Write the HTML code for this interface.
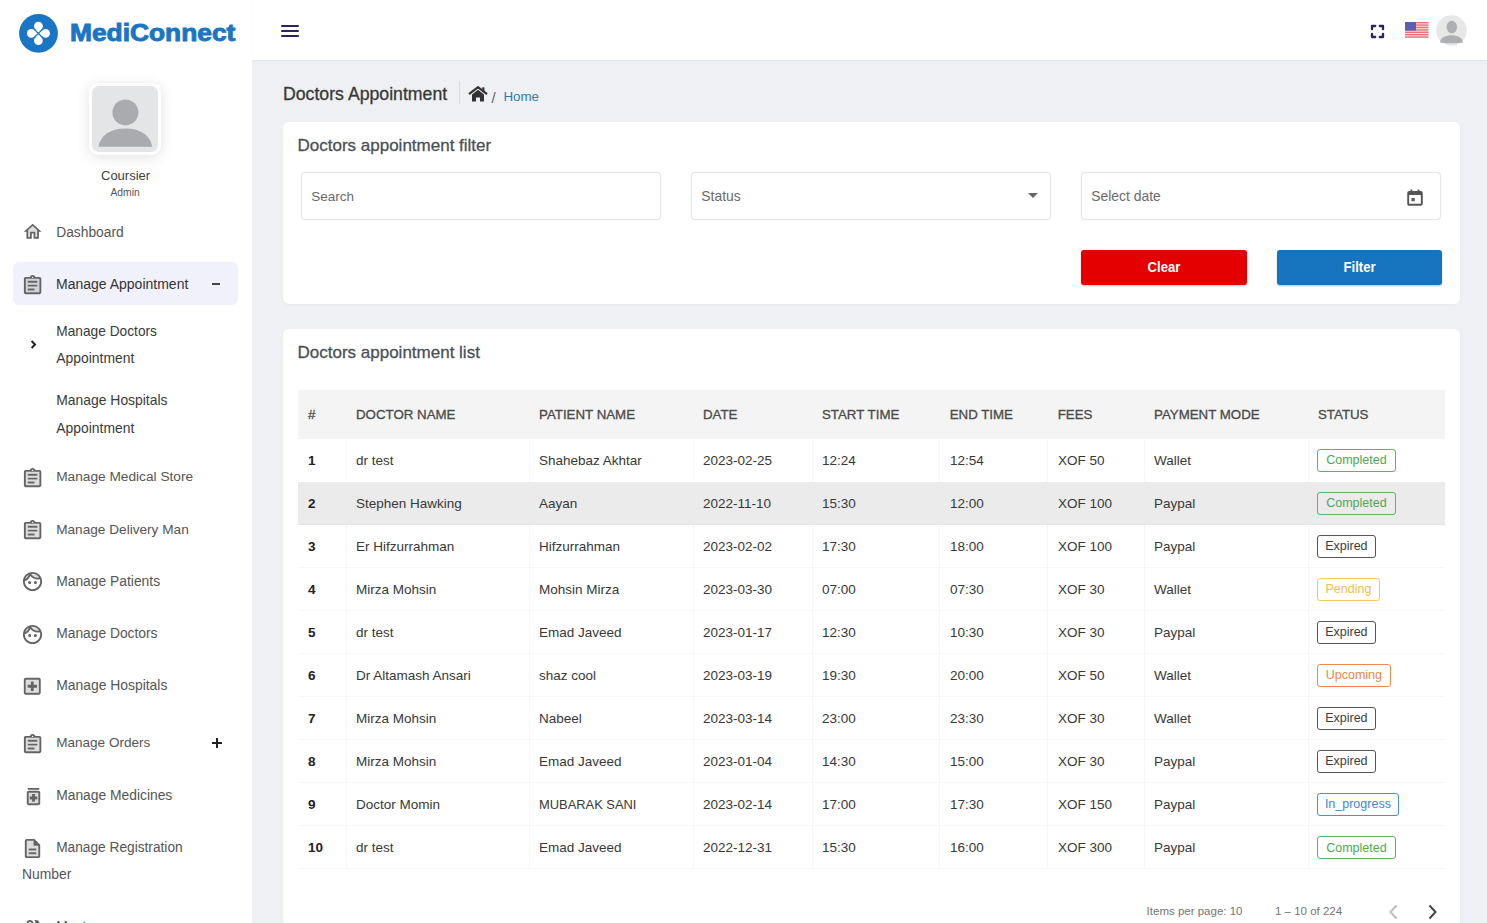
<!DOCTYPE html>
<html><head><meta charset="utf-8"><title>MediConnect</title>
<style>
*{box-sizing:border-box;margin:0;padding:0}
html,body{width:1487px;height:923px;overflow:hidden}
body{font-family:"Liberation Sans", sans-serif;background:#eef0f3;position:relative}
.a{position:absolute}
.t{position:absolute;white-space:nowrap;line-height:1}
</style></head><body>
<div class="a" style="left:0px;top:0px;width:252px;height:923px;background:#fff"></div>
<svg class="a" style="left:19px;top:14px" width="39" height="39" viewBox="0 0 39 39">
<circle cx="19.5" cy="19.4" r="19.4" fill="#1a76c4"/>
<g fill="#fff"><circle cx="19.4" cy="12.2" r="4.4"/><circle cx="19.4" cy="26.6" r="4.4"/><circle cx="12.3" cy="19.4" r="4.4"/><circle cx="26.5" cy="19.4" r="4.4"/>
<path d="M19.4 13.5 L25.3 19.4 L19.4 25.3 L13.5 19.4 Z"/></g>
<path d="M15.6 15.6 L23.2 23.2 M23.2 15.6 L15.6 23.2" stroke="#1a76c4" stroke-width="1.3"/>
</svg>
<div class="t" style="left:69.5px;top:21.6px;font-size:23px;line-height:23px;font-weight:bold;color:#1a76c4;transform-origin:0 0;transform:scaleX(1.145);-webkit-text-stroke:0.9px #1a76c4">MediConnect</div>
<div class="a" style="left:89px;top:83px;width:72px;height:72px;background:#fff;border-radius:9px;box-shadow:0 2px 14px rgba(0,0,0,.12)"></div>
<div class="a" style="left:92px;top:86px;width:66px;height:66px;background:#e4e5e7;border-radius:7px"></div>
<svg class="a" style="left:92px;top:86px" width="66" height="66" viewBox="0 0 66 66">
<circle cx="33.4" cy="26.4" r="13" fill="#a9abae"/>
<path d="M6.4 60.8 C8 50 18 42.5 33.4 42.5 C48.8 42.5 58.8 50 60.2 60.8 Z" fill="#a9abae"/>
</svg>
<div class="t" style="left:101px;top:168.55px;font-size:13px;color:#404040;font-weight:normal;">Coursier</div>
<div class="t" style="left:110.5px;top:187.75px;font-size:10.3px;color:#555;font-weight:normal;">Admin</div>
<div class="a" style="left:13px;top:262px;width:225px;height:43px;background:#f1f1fb;border-radius:6px"></div>
<svg class="a" style="left:22.4px;top:221.4px" width="21.36" height="21.36" viewBox="0 0 24 24"><path d="M7 10.19V18h2v-6h6v6h2v-7.81l-5-4.5z" fill="#636363" opacity=".22"/><path d="M12 3L2 12h3v8h6v-6h2v6h6v-8h3L12 3zm5 15h-2v-6H9v6H7v-7.81l5-4.5 5 4.5V18z" fill="#636363"/></svg>
<div class="t" style="left:56.2px;top:225.57px;font-size:13.8px;color:#555;font-weight:normal;">Dashboard</div>
<svg class="a" style="left:21.2px;top:273.6px" width="23.21" height="23.21" viewBox="0 0 24 24"><path d="M5 19h14V5H5v14zm2-12h10v2H7V7zm0 4h10v2H7v-2zm0 4h7v2H7v-2z" fill="#636363" opacity=".22"/><path d="M7 15h7v2H7zm0-4h10v2H7zm0-4h10v2H7zm12-4h-4.18C14.4 1.84 13.3 1 12 1c-.7 0-1.34.25-1.84.66-.29.23-.54.53-.73.86-.08.14-.14.31-.21.48H5c-.14 0-.27.01-.4.04-.39.08-.74.28-1.01.55-.18.18-.33.4-.43.64-.1.23-.16.49-.16.77v14c0 .27.06.54.16.78s.25.45.43.64c.27.27.62.47 1.01.55.13.02.26.03.4.03h14c1.1 0 2-.9 2-2V5c0-1.1-.9-2-2-2zm-7-.25c.41 0 .75.34.75.75s-.34.75-.75.75-.75-.34-.75-.75.34-.75.75-.75zM19 19H5V5h14v14z" fill="#636363"/></svg>
<div class="t" style="left:56.0px;top:277.20px;font-size:14.0px;color:#333;font-weight:normal;">Manage Appointment</div>
<div class="a" style="left:211.8px;top:283.3px;width:8.6px;height:1.3px;background:#444"></div>
<svg class="a" style="left:30px;top:340px" width="8" height="9" viewBox="0 0 8 9">
<path d="M1.6 1 L5 4.5 L1.6 8" fill="none" stroke="#222" stroke-width="2"/>
</svg>
<div class="t" style="left:56.3px;top:325.04px;font-size:13.72px;color:#3a3a3a;font-weight:normal;">Manage Doctors</div>
<div class="t" style="left:56.3px;top:351.79px;font-size:13.9px;color:#3a3a3a;font-weight:normal;">Appointment</div>
<div class="t" style="left:56.3px;top:394.38px;font-size:13.9px;color:#3a3a3a;font-weight:normal;">Manage Hospitals</div>
<div class="t" style="left:56.3px;top:421.79px;font-size:13.9px;color:#3a3a3a;font-weight:normal;">Appointment</div>
<svg class="a" style="left:21.2px;top:466.5px" width="23.21" height="23.21" viewBox="0 0 24 24"><path d="M5 19h14V5H5v14zm2-12h10v2H7V7zm0 4h10v2H7v-2zm0 4h7v2H7v-2z" fill="#636363" opacity=".22"/><path d="M7 15h7v2H7zm0-4h10v2H7zm0-4h10v2H7zm12-4h-4.18C14.4 1.84 13.3 1 12 1c-.7 0-1.34.25-1.84.66-.29.23-.54.53-.73.86-.08.14-.14.31-.21.48H5c-.14 0-.27.01-.4.04-.39.08-.74.28-1.01.55-.18.18-.33.4-.43.64-.1.23-.16.49-.16.77v14c0 .27.06.54.16.78s.25.45.43.64c.27.27.62.47 1.01.55.13.02.26.03.4.03h14c1.1 0 2-.9 2-2V5c0-1.1-.9-2-2-2zm-7-.25c.41 0 .75.34.75.75s-.34.75-.75.75-.75-.34-.75-.75.34-.75.75-.75zM19 19H5V5h14v14z" fill="#636363"/></svg>
<div class="t" style="left:56.2px;top:470.36px;font-size:13.69px;color:#555;font-weight:normal;">Manage Medical Store</div>
<svg class="a" style="left:21.2px;top:518.8px" width="23.21" height="23.21" viewBox="0 0 24 24"><path d="M5 19h14V5H5v14zm2-12h10v2H7V7zm0 4h10v2H7v-2zm0 4h7v2H7v-2z" fill="#636363" opacity=".22"/><path d="M7 15h7v2H7zm0-4h10v2H7zm0-4h10v2H7zm12-4h-4.18C14.4 1.84 13.3 1 12 1c-.7 0-1.34.25-1.84.66-.29.23-.54.53-.73.86-.08.14-.14.31-.21.48H5c-.14 0-.27.01-.4.04-.39.08-.74.28-1.01.55-.18.18-.33.4-.43.64-.1.23-.16.49-.16.77v14c0 .27.06.54.16.78s.25.45.43.64c.27.27.62.47 1.01.55.13.02.26.03.4.03h14c1.1 0 2-.9 2-2V5c0-1.1-.9-2-2-2zm-7-.25c.41 0 .75.34.75.75s-.34.75-.75.75-.75-.34-.75-.75.34-.75.75-.75zM19 19H5V5h14v14z" fill="#636363"/></svg>
<div class="t" style="left:56.2px;top:522.71px;font-size:13.64px;color:#555;font-weight:normal;">Manage Delivery Man</div>
<svg class="a" style="left:21.4px;top:569.9px" width="23.04" height="23.04" viewBox="0 0 24 24"><path d="M17.5 8c.46 0 .91-.05 1.34-.12C17.44 5.56 14.9 4 12 4c-.46 0-.91.05-1.34.12C12.06 6.44 14.6 8 17.5 8zM8.08 5.03C6.37 6 5.05 7.58 4.42 9.47c1.71-.97 3.03-2.55 3.66-4.44z" fill="#636363" opacity=".22"/><path d="M12 2C6.48 2 2 6.48 2 12s4.48 10 10 10 10-4.48 10-10S17.52 2 12 2zm0 2c2.9 0 5.44 1.56 6.84 3.88-.43.07-.88.12-1.34.12-2.9 0-5.44-1.56-6.84-3.88.43-.07.88-.12 1.34-.12zM8.08 5.03C7.45 6.92 6.13 8.5 4.42 9.47 5.05 7.58 6.37 6 8.08 5.03zM12 20c-4.41 0-8-3.59-8-8 0-.05.01-.1.01-.15 2.6-.98 4.68-2.99 5.74-5.55 1.83 2.26 4.63 3.7 7.75 3.7.75 0 1.47-.09 2.17-.24.21.71.33 1.46.33 2.24 0 4.41-3.59 8-8 8z" fill="#636363"/><path d="M7.4 13a1.6 1.6 0 1 0 3.2 0a1.6 1.6 0 1 0 -3.2 0zM13.4 13a1.6 1.6 0 1 0 3.2 0a1.6 1.6 0 1 0 -3.2 0z" fill="#636363"/></svg>
<div class="t" style="left:56.2px;top:574.53px;font-size:13.85px;color:#555;font-weight:normal;">Manage Patients</div>
<svg class="a" style="left:21.4px;top:622.5px" width="23.04" height="23.04" viewBox="0 0 24 24"><path d="M17.5 8c.46 0 .91-.05 1.34-.12C17.44 5.56 14.9 4 12 4c-.46 0-.91.05-1.34.12C12.06 6.44 14.6 8 17.5 8zM8.08 5.03C6.37 6 5.05 7.58 4.42 9.47c1.71-.97 3.03-2.55 3.66-4.44z" fill="#636363" opacity=".22"/><path d="M12 2C6.48 2 2 6.48 2 12s4.48 10 10 10 10-4.48 10-10S17.52 2 12 2zm0 2c2.9 0 5.44 1.56 6.84 3.88-.43.07-.88.12-1.34.12-2.9 0-5.44-1.56-6.84-3.88.43-.07.88-.12 1.34-.12zM8.08 5.03C7.45 6.92 6.13 8.5 4.42 9.47 5.05 7.58 6.37 6 8.08 5.03zM12 20c-4.41 0-8-3.59-8-8 0-.05.01-.1.01-.15 2.6-.98 4.68-2.99 5.74-5.55 1.83 2.26 4.63 3.7 7.75 3.7.75 0 1.47-.09 2.17-.24.21.71.33 1.46.33 2.24 0 4.41-3.59 8-8 8z" fill="#636363"/><path d="M7.4 13a1.6 1.6 0 1 0 3.2 0a1.6 1.6 0 1 0 -3.2 0zM13.4 13a1.6 1.6 0 1 0 3.2 0a1.6 1.6 0 1 0 -3.2 0z" fill="#636363"/></svg>
<div class="t" style="left:56.2px;top:626.85px;font-size:13.82px;color:#555;font-weight:normal;">Manage Doctors</div>
<svg class="a" style="left:21.4px;top:674.9px" width="22.56" height="22.56" viewBox="0 0 24 24"><path d="M5 19h14V5H5v14zm2-8.5h3.5V7h3v3.5H17v3h-3.5V17h-3v-3.5H7v-3z" fill="#636363" opacity=".22"/><path d="M19 3H5c-1.1 0-1.99.9-1.99 2L3 19c0 1.1.9 2 2 2h14c1.1 0 2-.9 2-2V5c0-1.1-.9-2-2-2zm0 16H5V5h14v14zm-8.5-2h3v-3.5H17v-3h-3.5V7h-3v3.5H7v3h3.5z" fill="#636363"/></svg>
<div class="t" style="left:56.2px;top:679.38px;font-size:13.9px;color:#555;font-weight:normal;">Manage Hospitals</div>
<svg class="a" style="left:21.2px;top:732.6px" width="23.21" height="23.21" viewBox="0 0 24 24"><path d="M5 19h14V5H5v14zm2-12h10v2H7V7zm0 4h10v2H7v-2zm0 4h7v2H7v-2z" fill="#636363" opacity=".22"/><path d="M7 15h7v2H7zm0-4h10v2H7zm0-4h10v2H7zm12-4h-4.18C14.4 1.84 13.3 1 12 1c-.7 0-1.34.25-1.84.66-.29.23-.54.53-.73.86-.08.14-.14.31-.21.48H5c-.14 0-.27.01-.4.04-.39.08-.74.28-1.01.55-.18.18-.33.4-.43.64-.1.23-.16.49-.16.77v14c0 .27.06.54.16.78s.25.45.43.64c.27.27.62.47 1.01.55.13.02.26.03.4.03h14c1.1 0 2-.9 2-2V5c0-1.1-.9-2-2-2zm-7-.25c.41 0 .75.34.75.75s-.34.75-.75.75-.75-.34-.75-.75.34-.75.75-.75zM19 19H5V5h14v14z" fill="#636363"/></svg>
<div class="t" style="left:56.2px;top:736.47px;font-size:13.56px;color:#555;font-weight:normal;">Manage Orders</div>
<div class="a" style="left:212.2px;top:742.4px;width:9.8px;height:1.8px;background:#222"></div>
<div class="a" style="left:216.2px;top:738.4px;width:1.8px;height:9.8px;background:#222"></div>
<svg class="a" style="left:21.7px;top:784.5px" width="23.04" height="23.04" viewBox="0 0 24 24"><path d="M7 19h10V8H7v11zm1-6.5h2.5V10h3v2.5H16v3h-2.5V18h-3v-2.5H8v-3z" fill="#636363" opacity=".22"/><path d="M6 3h12v2H6zm11 3H7c-1.1 0-2 .9-2 2v11c0 1.1.9 2 2 2h10c1.1 0 2-.9 2-2V8c0-1.1-.9-2-2-2zm0 13H7V8h10v11zm-6.5-1.5h3V15H16v-3h-2.5V9.5h-3V12H8v3h2.5z" fill="#636363"/></svg>
<div class="t" style="left:56.2px;top:788.74px;font-size:13.84px;color:#555;font-weight:normal;">Manage Medicines</div>
<svg class="a" style="left:21.4px;top:837.4px" width="23.04" height="23.04" viewBox="0 0 24 24"><path d="M13 4H6v16h12V9h-5V4zm3 14H8v-2h8v2zm0-6v2H8v-2h8z" fill="#636363" opacity=".22"/><path d="M8 16h8v2H8zm0-4h8v2H8zm6-10H6c-1.1 0-2 .9-2 2v16c0 1.1.89 2 1.99 2H18c1.1 0 2-.9 2-2V8l-6-6zm4 18H6V4h7v5h5v11z" fill="#636363"/></svg>
<div class="t" style="left:56.2px;top:841.05px;font-size:13.71px;color:#555;font-weight:normal;">Manage Registration</div>
<div class="t" style="left:21.9px;top:867.68px;font-size:13.9px;color:#555;font-weight:normal;">Number</div>
<svg class="a" style="left:20.5px;top:915px" width="24" height="24" viewBox="0 0 24 24"><path d="M9 13.75c-2.34 0-7 1.17-7 3.5V19h14v-1.75c0-2.33-4.66-3.5-7-3.5zM9 12c1.93 0 3.5-1.57 3.5-3.5S10.93 5 9 5 5.5 6.57 5.5 8.5 7.07 12 9 12zm0-5c.83 0 1.5.67 1.5 1.5S9.83 10 9 10s-1.5-.67-1.5-1.5S8.17 7 9 7zm7.04 6.81c1.16.84 1.96 1.96 1.96 3.44V19h4v-1.75c0-2.02-3.5-3.17-5.96-3.44zM15 12c1.93 0 3.5-1.57 3.5-3.5S16.93 5 15 5c-.54 0-1.04.13-1.5.35.63.89 1 1.98 1 3.15s-.37 2.26-1 3.15c.46.22.96.35 1.5.35z" fill="#636363"/></svg>
<div class="t" style="left:56.2px;top:920.18px;font-size:13.9px;color:#555;font-weight:normal;">Masters</div>
<div class="a" style="left:252px;top:0px;width:1235px;height:59.5px;background:#fff;box-shadow:0 1px 2px rgba(0,0,0,.05)"></div>
<div class="a" style="left:281px;top:25px;width:18px;height:2px;background:#2a2560;border-radius:1px"></div>
<div class="a" style="left:281px;top:30px;width:18px;height:2px;background:#2a2560;border-radius:1px"></div>
<div class="a" style="left:281px;top:35px;width:18px;height:2px;background:#2a2560;border-radius:1px"></div>
<svg class="a" style="left:1370px;top:23.5px" width="15" height="15" viewBox="0 0 15 15">
<path d="M2 5.2 V2 H5.2 M9.8 2 H13 V5.2 M13 9.8 V13 H9.8 M5.2 13 H2 V9.8" fill="none" stroke="#2a2560" stroke-width="2.3" stroke-linejoin="round" stroke-linecap="round"/>
</svg>
<svg class="a" style="left:1405px;top:22px" width="23.5" height="15.5" viewBox="0 0 23.5 15.5"><rect x="0" y="0" width="23.5" height="15.5" fill="#fbe3e5"/><rect x="0" y="0.00" width="23.5" height="1.35" fill="#ee6b74"/><rect x="0" y="2.40" width="23.5" height="1.35" fill="#ee6b74"/><rect x="0" y="4.80" width="23.5" height="1.35" fill="#ee6b74"/><rect x="0" y="7.20" width="23.5" height="1.35" fill="#ee6b74"/><rect x="0" y="9.60" width="23.5" height="1.35" fill="#ee6b74"/><rect x="0" y="12.00" width="23.5" height="1.35" fill="#ee6b74"/><rect x="0" y="14.40" width="23.5" height="1.35" fill="#ee6b74"/><rect x="0" y="0" width="11" height="8.6" fill="#5a60ae"/></svg>
<svg class="a" style="left:1436px;top:15px" width="31" height="31" viewBox="0 0 31 31">
<circle cx="15.5" cy="15.5" r="15.3" fill="#e7e7e8"/>
<ellipse cx="15.8" cy="12.1" rx="5.3" ry="6.3" fill="#adafb2"/>
<path d="M4 27.3 C4.5 22.5 9.5 20.3 15.5 20.3 C21.5 20.3 26.5 22.5 27 27.3 C25 28.2 21 28.3 15.5 28.3 C10 28.3 6 28.2 4 27.3 Z" fill="#adafb2"/>
</svg>
<div class="t" style="left:283px;top:85.95px;font-size:17.7px;color:#383838;font-weight:normal;-webkit-text-stroke:0.3px #383838">Doctors Appointment</div>
<div class="a" style="left:458.5px;top:81px;width:1.5px;height:23px;background:#d9dadd"></div>
<svg class="a" style="left:468px;top:86px" width="20" height="16" viewBox="0 0 20 16">
<path d="M1 8.2 L10 1.2 L19 8.2" fill="none" stroke="#333" stroke-width="2.2"/>
<rect x="14.2" y="1.3" width="2.2" height="4.5" fill="#333"/>
<path d="M4 8.5 L10 3.8 L16 8.5 V15.5 H12 V11.5 H8 V15.5 H4 Z" fill="#333"/>
</svg>
<div class="t" style="left:491.5px;top:89.55px;font-size:15px;color:#666;font-weight:normal;">/</div>
<div class="t" style="left:503.5px;top:90.19px;font-size:13.3px;color:#2d7ab9;font-weight:normal;">Home</div>
<div class="a" style="left:283px;top:122px;width:1177px;height:182px;background:#fff;border-radius:6px;box-shadow:0 1px 3px rgba(0,0,0,.04)"></div>
<div class="t" style="left:297.5px;top:136.55px;font-size:17px;color:#4a4f56;font-weight:normal;-webkit-text-stroke:0.28px #4a4f56">Doctors appointment filter</div>
<div class="a" style="left:301px;top:171.6px;width:360px;height:48.6px;background:#fff;border:1px solid #e6e6e6;border-radius:4px;box-shadow:0 0 2px rgba(0,0,0,.07)"></div>
<div class="t" style="left:311.3px;top:190.43px;font-size:13.5px;color:#6b6b6b;font-weight:normal;">Search</div>
<div class="a" style="left:691px;top:171.6px;width:360px;height:48.6px;background:#fff;border:1px solid #e6e6e6;border-radius:4px;box-shadow:0 0 2px rgba(0,0,0,.07)"></div>
<div class="t" style="left:701.3px;top:190.09px;font-size:13.9px;color:#6b6b6b;font-weight:normal;">Status</div>
<div class="a" style="left:1081px;top:171.6px;width:360px;height:48.6px;background:#fff;border:1px solid #e6e6e6;border-radius:4px;box-shadow:0 0 2px rgba(0,0,0,.07)"></div>
<div class="t" style="left:1091.3px;top:190.09px;font-size:13.9px;color:#6b6b6b;font-weight:normal;">Select date</div>
<svg class="a" style="left:1028px;top:193px" width="10" height="5" viewBox="0 0 10 5"><path d="M0 0 H10 L5 5 Z" fill="#666"/></svg>
<svg class="a" style="left:1407px;top:189px" width="16" height="17" viewBox="0 0 16 17">
<rect x="1.2" y="3" width="13.6" height="12.8" rx="1" fill="none" stroke="#555" stroke-width="1.9"/>
<rect x="1.2" y="3" width="13.6" height="3" fill="#555"/>
<rect x="3.5" y="0.5" width="1.8" height="3" fill="#555"/><rect x="10.7" y="0.5" width="1.8" height="3" fill="#555"/>
<rect x="4.5" y="9" width="3.2" height="3.2" fill="#555"/>
</svg>
<div class="a" style="left:1081px;top:250px;width:166px;height:34.5px;background:#e50000;border-radius:3px;box-shadow:0 1px 2px rgba(0,0,0,.25)"></div>
<div class="a" style="left:1276.5px;top:250px;width:165px;height:34.5px;background:#1674bf;border-radius:3px;box-shadow:0 1px 2px rgba(0,0,0,.25)"></div>
<div class="t" style="left:1081px;width:166px;text-align:center;top:260.3px;font-size:14.4px;font-weight:bold;color:#fff;transform:scaleX(0.91)">Clear</div>
<div class="t" style="left:1276.5px;width:165px;text-align:center;top:260.3px;font-size:14.4px;font-weight:bold;color:#fff;transform:scaleX(0.91)">Filter</div>
<div class="a" style="left:283px;top:329px;width:1177px;height:700px;background:#fff;border-radius:6px;box-shadow:0 1px 3px rgba(0,0,0,.04)"></div>
<div class="t" style="left:297.5px;top:343.55px;font-size:17px;color:#4a4f56;font-weight:normal;-webkit-text-stroke:0.28px #4a4f56">Doctors appointment list</div>
<div class="a" style="left:298px;top:389.5px;width:1147px;height:49.1px;background:#f4f4f4"></div>
<div class="a" style="left:298px;top:481.63px;width:1147px;height:43.03px;background:#ebebeb"></div>
<div class="a" style="left:298px;top:524.1600000000001px;width:1147px;height:1px;background:rgba(0,0,0,.032)"></div>
<div class="a" style="left:298px;top:567.19px;width:1147px;height:1px;background:rgba(0,0,0,.032)"></div>
<div class="a" style="left:298px;top:610.22px;width:1147px;height:1px;background:rgba(0,0,0,.032)"></div>
<div class="a" style="left:298px;top:653.25px;width:1147px;height:1px;background:rgba(0,0,0,.032)"></div>
<div class="a" style="left:298px;top:696.28px;width:1147px;height:1px;background:rgba(0,0,0,.032)"></div>
<div class="a" style="left:298px;top:739.3100000000001px;width:1147px;height:1px;background:rgba(0,0,0,.032)"></div>
<div class="a" style="left:298px;top:782.34px;width:1147px;height:1px;background:rgba(0,0,0,.032)"></div>
<div class="a" style="left:298px;top:825.37px;width:1147px;height:1px;background:rgba(0,0,0,.032)"></div>
<div class="a" style="left:298px;top:868.4000000000001px;width:1147px;height:1px;background:rgba(0,0,0,.032)"></div>
<div class="a" style="left:346px;top:438.6px;width:1px;height:43.03px;background:rgba(0,0,0,.03)"></div>
<div class="a" style="left:346px;top:524.6600000000001px;width:1px;height:344.24px;background:rgba(0,0,0,.03)"></div>
<div class="a" style="left:529px;top:438.6px;width:1px;height:43.03px;background:rgba(0,0,0,.03)"></div>
<div class="a" style="left:529px;top:524.6600000000001px;width:1px;height:344.24px;background:rgba(0,0,0,.03)"></div>
<div class="a" style="left:693px;top:438.6px;width:1px;height:43.03px;background:rgba(0,0,0,.03)"></div>
<div class="a" style="left:693px;top:524.6600000000001px;width:1px;height:344.24px;background:rgba(0,0,0,.03)"></div>
<div class="a" style="left:812px;top:438.6px;width:1px;height:43.03px;background:rgba(0,0,0,.03)"></div>
<div class="a" style="left:812px;top:524.6600000000001px;width:1px;height:344.24px;background:rgba(0,0,0,.03)"></div>
<div class="a" style="left:939px;top:438.6px;width:1px;height:43.03px;background:rgba(0,0,0,.03)"></div>
<div class="a" style="left:939px;top:524.6600000000001px;width:1px;height:344.24px;background:rgba(0,0,0,.03)"></div>
<div class="a" style="left:1047px;top:438.6px;width:1px;height:43.03px;background:rgba(0,0,0,.03)"></div>
<div class="a" style="left:1047px;top:524.6600000000001px;width:1px;height:344.24px;background:rgba(0,0,0,.03)"></div>
<div class="a" style="left:1144px;top:438.6px;width:1px;height:43.03px;background:rgba(0,0,0,.03)"></div>
<div class="a" style="left:1144px;top:524.6600000000001px;width:1px;height:344.24px;background:rgba(0,0,0,.03)"></div>
<div class="a" style="left:1308px;top:438.6px;width:1px;height:43.03px;background:rgba(0,0,0,.03)"></div>
<div class="a" style="left:1308px;top:524.6600000000001px;width:1px;height:344.24px;background:rgba(0,0,0,.03)"></div>
<div class="t" style="left:308px;top:408.09px;font-size:13.3px;color:#4a4a4a;font-weight:normal;-webkit-text-stroke:0.3px #4a4a4a">#</div>
<div class="t" style="left:356px;top:408.09px;font-size:13.3px;color:#4a4a4a;font-weight:normal;-webkit-text-stroke:0.3px #4a4a4a">DOCTOR NAME</div>
<div class="t" style="left:539px;top:408.09px;font-size:13.3px;color:#4a4a4a;font-weight:normal;-webkit-text-stroke:0.3px #4a4a4a">PATIENT NAME</div>
<div class="t" style="left:703px;top:408.09px;font-size:13.3px;color:#4a4a4a;font-weight:normal;-webkit-text-stroke:0.3px #4a4a4a">DATE</div>
<div class="t" style="left:822px;top:408.09px;font-size:13.3px;color:#4a4a4a;font-weight:normal;-webkit-text-stroke:0.3px #4a4a4a">START TIME</div>
<div class="t" style="left:949.7px;top:408.09px;font-size:13.3px;color:#4a4a4a;font-weight:normal;-webkit-text-stroke:0.3px #4a4a4a">END TIME</div>
<div class="t" style="left:1057.7px;top:408.09px;font-size:13.3px;color:#4a4a4a;font-weight:normal;-webkit-text-stroke:0.3px #4a4a4a">FEES</div>
<div class="t" style="left:1154px;top:408.09px;font-size:13.3px;color:#4a4a4a;font-weight:normal;-webkit-text-stroke:0.3px #4a4a4a">PAYMENT MODE</div>
<div class="t" style="left:1318px;top:408.09px;font-size:13.3px;color:#4a4a4a;font-weight:normal;-webkit-text-stroke:0.3px #4a4a4a">STATUS</div>
<div class="t" style="left:308px;top:454.02px;font-size:13.5px;color:#222;font-weight:bold;">1</div>
<div class="t" style="left:356px;top:454.02px;font-size:13.5px;color:#383838;font-weight:normal;">dr test</div>
<div class="t" style="left:539px;top:454.02px;font-size:13.5px;color:#383838;font-weight:normal;">Shahebaz Akhtar</div>
<div class="t" style="left:703px;top:454.02px;font-size:13.5px;color:#383838;font-weight:normal;">2023-02-25</div>
<div class="t" style="left:822px;top:454.02px;font-size:13.5px;color:#383838;font-weight:normal;">12:24</div>
<div class="t" style="left:950px;top:454.02px;font-size:13.5px;color:#383838;font-weight:normal;">12:54</div>
<div class="t" style="left:1058px;top:454.02px;font-size:13.5px;color:#383838;font-weight:normal;">XOF 50</div>
<div class="t" style="left:1154px;top:454.02px;font-size:13.5px;color:#383838;font-weight:normal;">Wallet</div>
<div class="a" style="left:1316.9px;top:449.1px;width:79px;height:22.5px;border:1.4px solid #5cb563;border-radius:3px"></div>
<div class="t" style="left:1316.9px;width:79px;text-align:center;top:454.2px;font-size:12.5px;color:#4caa52">Completed</div>
<div class="t" style="left:308px;top:497.05px;font-size:13.5px;color:#222;font-weight:bold;">2</div>
<div class="t" style="left:356px;top:497.05px;font-size:13.5px;color:#383838;font-weight:normal;">Stephen Hawking</div>
<div class="t" style="left:539px;top:497.05px;font-size:13.5px;color:#383838;font-weight:normal;">Aayan</div>
<div class="t" style="left:703px;top:497.05px;font-size:13.5px;color:#383838;font-weight:normal;">2022-11-10</div>
<div class="t" style="left:822px;top:497.05px;font-size:13.5px;color:#383838;font-weight:normal;">15:30</div>
<div class="t" style="left:950px;top:497.05px;font-size:13.5px;color:#383838;font-weight:normal;">12:00</div>
<div class="t" style="left:1058px;top:497.05px;font-size:13.5px;color:#383838;font-weight:normal;">XOF 100</div>
<div class="t" style="left:1154px;top:497.05px;font-size:13.5px;color:#383838;font-weight:normal;">Paypal</div>
<div class="a" style="left:1316.9px;top:492.1px;width:79px;height:22.5px;border:1.4px solid #5cb563;border-radius:3px"></div>
<div class="t" style="left:1316.9px;width:79px;text-align:center;top:497.2px;font-size:12.5px;color:#4caa52">Completed</div>
<div class="t" style="left:308px;top:540.09px;font-size:13.5px;color:#222;font-weight:bold;">3</div>
<div class="t" style="left:356px;top:540.09px;font-size:13.5px;color:#383838;font-weight:normal;">Er Hifzurrahman</div>
<div class="t" style="left:539px;top:540.09px;font-size:13.5px;color:#383838;font-weight:normal;">Hifzurrahman</div>
<div class="t" style="left:703px;top:540.09px;font-size:13.5px;color:#383838;font-weight:normal;">2023-02-02</div>
<div class="t" style="left:822px;top:540.09px;font-size:13.5px;color:#383838;font-weight:normal;">17:30</div>
<div class="t" style="left:950px;top:540.09px;font-size:13.5px;color:#383838;font-weight:normal;">18:00</div>
<div class="t" style="left:1058px;top:540.09px;font-size:13.5px;color:#383838;font-weight:normal;">XOF 100</div>
<div class="t" style="left:1154px;top:540.09px;font-size:13.5px;color:#383838;font-weight:normal;">Paypal</div>
<div class="a" style="left:1316.9px;top:535.2px;width:59px;height:22.5px;border:1.4px solid #555;border-radius:3px"></div>
<div class="t" style="left:1316.9px;width:59px;text-align:center;top:540.3px;font-size:12.5px;color:#3d3d3d">Expired</div>
<div class="t" style="left:308px;top:583.12px;font-size:13.5px;color:#222;font-weight:bold;">4</div>
<div class="t" style="left:356px;top:583.12px;font-size:13.5px;color:#383838;font-weight:normal;">Mirza Mohsin</div>
<div class="t" style="left:539px;top:583.12px;font-size:13.5px;color:#383838;font-weight:normal;">Mohsin Mirza</div>
<div class="t" style="left:703px;top:583.12px;font-size:13.5px;color:#383838;font-weight:normal;">2023-03-30</div>
<div class="t" style="left:822px;top:583.12px;font-size:13.5px;color:#383838;font-weight:normal;">07:00</div>
<div class="t" style="left:950px;top:583.12px;font-size:13.5px;color:#383838;font-weight:normal;">07:30</div>
<div class="t" style="left:1058px;top:583.12px;font-size:13.5px;color:#383838;font-weight:normal;">XOF 30</div>
<div class="t" style="left:1154px;top:583.12px;font-size:13.5px;color:#383838;font-weight:normal;">Wallet</div>
<div class="a" style="left:1316.9px;top:578.2px;width:63px;height:22.5px;border:1.4px solid #f7c75a;border-radius:3px"></div>
<div class="t" style="left:1316.9px;width:63px;text-align:center;top:583.3px;font-size:12.5px;color:#f3c142">Pending</div>
<div class="t" style="left:308px;top:626.14px;font-size:13.5px;color:#222;font-weight:bold;">5</div>
<div class="t" style="left:356px;top:626.14px;font-size:13.5px;color:#383838;font-weight:normal;">dr test</div>
<div class="t" style="left:539px;top:626.14px;font-size:13.5px;color:#383838;font-weight:normal;">Emad Javeed</div>
<div class="t" style="left:703px;top:626.14px;font-size:13.5px;color:#383838;font-weight:normal;">2023-01-17</div>
<div class="t" style="left:822px;top:626.14px;font-size:13.5px;color:#383838;font-weight:normal;">12:30</div>
<div class="t" style="left:950px;top:626.14px;font-size:13.5px;color:#383838;font-weight:normal;">10:30</div>
<div class="t" style="left:1058px;top:626.14px;font-size:13.5px;color:#383838;font-weight:normal;">XOF 30</div>
<div class="t" style="left:1154px;top:626.14px;font-size:13.5px;color:#383838;font-weight:normal;">Paypal</div>
<div class="a" style="left:1316.9px;top:621.2px;width:59px;height:22.5px;border:1.4px solid #555;border-radius:3px"></div>
<div class="t" style="left:1316.9px;width:59px;text-align:center;top:626.3px;font-size:12.5px;color:#3d3d3d">Expired</div>
<div class="t" style="left:308px;top:669.17px;font-size:13.5px;color:#222;font-weight:bold;">6</div>
<div class="t" style="left:356px;top:669.17px;font-size:13.5px;color:#383838;font-weight:normal;">Dr Altamash Ansari</div>
<div class="t" style="left:539px;top:669.17px;font-size:13.5px;color:#383838;font-weight:normal;">shaz cool</div>
<div class="t" style="left:703px;top:669.17px;font-size:13.5px;color:#383838;font-weight:normal;">2023-03-19</div>
<div class="t" style="left:822px;top:669.17px;font-size:13.5px;color:#383838;font-weight:normal;">19:30</div>
<div class="t" style="left:950px;top:669.17px;font-size:13.5px;color:#383838;font-weight:normal;">20:00</div>
<div class="t" style="left:1058px;top:669.17px;font-size:13.5px;color:#383838;font-weight:normal;">XOF 50</div>
<div class="t" style="left:1154px;top:669.17px;font-size:13.5px;color:#383838;font-weight:normal;">Wallet</div>
<div class="a" style="left:1316.9px;top:664.2px;width:74px;height:22.5px;border:1.4px solid #f0894d;border-radius:3px"></div>
<div class="t" style="left:1316.9px;width:74px;text-align:center;top:669.4px;font-size:12.5px;color:#ee8447">Upcoming</div>
<div class="t" style="left:308px;top:712.20px;font-size:13.5px;color:#222;font-weight:bold;">7</div>
<div class="t" style="left:356px;top:712.20px;font-size:13.5px;color:#383838;font-weight:normal;">Mirza Mohsin</div>
<div class="t" style="left:539px;top:712.20px;font-size:13.5px;color:#383838;font-weight:normal;">Nabeel</div>
<div class="t" style="left:703px;top:712.20px;font-size:13.5px;color:#383838;font-weight:normal;">2023-03-14</div>
<div class="t" style="left:822px;top:712.20px;font-size:13.5px;color:#383838;font-weight:normal;">23:00</div>
<div class="t" style="left:950px;top:712.20px;font-size:13.5px;color:#383838;font-weight:normal;">23:30</div>
<div class="t" style="left:1058px;top:712.20px;font-size:13.5px;color:#383838;font-weight:normal;">XOF 30</div>
<div class="t" style="left:1154px;top:712.20px;font-size:13.5px;color:#383838;font-weight:normal;">Wallet</div>
<div class="a" style="left:1316.9px;top:707.3px;width:59px;height:22.5px;border:1.4px solid #555;border-radius:3px"></div>
<div class="t" style="left:1316.9px;width:59px;text-align:center;top:712.4px;font-size:12.5px;color:#3d3d3d">Expired</div>
<div class="t" style="left:308px;top:755.24px;font-size:13.5px;color:#222;font-weight:bold;">8</div>
<div class="t" style="left:356px;top:755.24px;font-size:13.5px;color:#383838;font-weight:normal;">Mirza Mohsin</div>
<div class="t" style="left:539px;top:755.24px;font-size:13.5px;color:#383838;font-weight:normal;">Emad Javeed</div>
<div class="t" style="left:703px;top:755.24px;font-size:13.5px;color:#383838;font-weight:normal;">2023-01-04</div>
<div class="t" style="left:822px;top:755.24px;font-size:13.5px;color:#383838;font-weight:normal;">14:30</div>
<div class="t" style="left:950px;top:755.24px;font-size:13.5px;color:#383838;font-weight:normal;">15:00</div>
<div class="t" style="left:1058px;top:755.24px;font-size:13.5px;color:#383838;font-weight:normal;">XOF 30</div>
<div class="t" style="left:1154px;top:755.24px;font-size:13.5px;color:#383838;font-weight:normal;">Paypal</div>
<div class="a" style="left:1316.9px;top:750.3px;width:59px;height:22.5px;border:1.4px solid #555;border-radius:3px"></div>
<div class="t" style="left:1316.9px;width:59px;text-align:center;top:755.4px;font-size:12.5px;color:#3d3d3d">Expired</div>
<div class="t" style="left:308px;top:798.26px;font-size:13.5px;color:#222;font-weight:bold;">9</div>
<div class="t" style="left:356px;top:798.26px;font-size:13.5px;color:#383838;font-weight:normal;">Doctor Momin</div>
<div class="t" style="left:539px;top:798.77px;font-size:12.9px;color:#383838;font-weight:normal;">MUBARAK SANI</div>
<div class="t" style="left:703px;top:798.26px;font-size:13.5px;color:#383838;font-weight:normal;">2023-02-14</div>
<div class="t" style="left:822px;top:798.26px;font-size:13.5px;color:#383838;font-weight:normal;">17:00</div>
<div class="t" style="left:950px;top:798.26px;font-size:13.5px;color:#383838;font-weight:normal;">17:30</div>
<div class="t" style="left:1058px;top:798.26px;font-size:13.5px;color:#383838;font-weight:normal;">XOF 150</div>
<div class="t" style="left:1154px;top:798.26px;font-size:13.5px;color:#383838;font-weight:normal;">Paypal</div>
<div class="a" style="left:1316.9px;top:793.3px;width:82px;height:22.5px;border:1.4px solid #4a8fdc;border-radius:3px"></div>
<div class="t" style="left:1316.9px;width:82px;text-align:center;top:798.4px;font-size:12.5px;color:#3f88d8">In_progress</div>
<div class="t" style="left:308px;top:841.29px;font-size:13.5px;color:#222;font-weight:bold;">10</div>
<div class="t" style="left:356px;top:841.29px;font-size:13.5px;color:#383838;font-weight:normal;">dr test</div>
<div class="t" style="left:539px;top:841.29px;font-size:13.5px;color:#383838;font-weight:normal;">Emad Javeed</div>
<div class="t" style="left:703px;top:841.29px;font-size:13.5px;color:#383838;font-weight:normal;">2022-12-31</div>
<div class="t" style="left:822px;top:841.29px;font-size:13.5px;color:#383838;font-weight:normal;">15:30</div>
<div class="t" style="left:950px;top:841.29px;font-size:13.5px;color:#383838;font-weight:normal;">16:00</div>
<div class="t" style="left:1058px;top:841.29px;font-size:13.5px;color:#383838;font-weight:normal;">XOF 300</div>
<div class="t" style="left:1154px;top:841.29px;font-size:13.5px;color:#383838;font-weight:normal;">Paypal</div>
<div class="a" style="left:1316.9px;top:836.4px;width:79px;height:22.5px;border:1.4px solid #5cb563;border-radius:3px"></div>
<div class="t" style="left:1316.9px;width:79px;text-align:center;top:841.5px;font-size:12.5px;color:#4caa52">Completed</div>
<div class="t" style="left:1146.6px;top:905.93px;font-size:11.5px;color:#757575;font-weight:normal;">Items per page: 10</div>
<div class="t" style="left:1275px;top:905.93px;font-size:11.5px;color:#757575;font-weight:normal;">1 – 10 of 224</div>
<svg class="a" style="left:1388px;top:904px" width="11" height="16" viewBox="0 0 11 16"><path d="M8.5 1.5 L2.5 8 L8.5 14.5" fill="none" stroke="#bdbdbd" stroke-width="2"/></svg>
<svg class="a" style="left:1427px;top:904px" width="11" height="16" viewBox="0 0 11 16"><path d="M2.5 1.5 L8.5 8 L2.5 14.5" fill="none" stroke="#444" stroke-width="2"/></svg>
</body></html>
